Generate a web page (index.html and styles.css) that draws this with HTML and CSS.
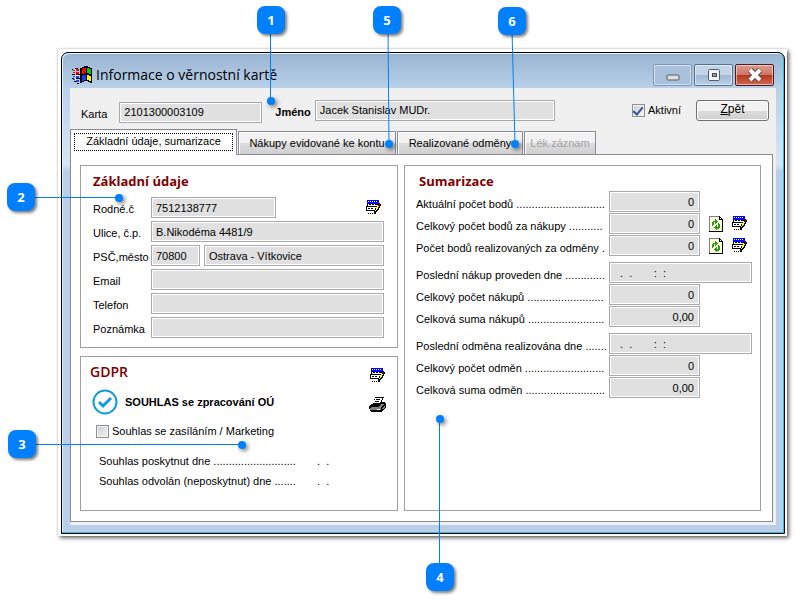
FILE: index.html
```html
<!DOCTYPE html>
<html lang="cs">
<head>
    <meta charset="UTF-8">
    <meta name="viewport" content="width=device-width, initial-scale=1.0">
    <title>Informace o věrnostní kartě</title>
    <link rel="stylesheet" href="styles.css">
</head>
<body>
    <!-- Shared icons -->
    <svg class="sprite" aria-hidden="true">
        <symbol id="icon-edit" viewBox="0 0 15 15" shape-rendering="crispEdges">
            <path fill="#0000ff" d="M1 0h12v4H1z"/>
            <path fill="#fff" d="M2 1h1v1H2zM4 1h1v1H4zM6 1h1v1H6zM8 1h1v1H8zM10 1h1v1h-1z"/>
            <path fill="#000" d="M1 4h11v3H1zM0 6h11v5H0z"/>
            <path fill="#fff" d="M2 4h10v2H2zM1 7h9v3H1z"/>
            <path fill="#000" d="M3 4h2v1H3zM6 4h2v1H6zM9 4h2v1H9zM2 8h2v1H2zM5 8h2v1H5zM2 13h1v1H2zM4 13h1v1H4zM6 13h1v1H6zM8 11h2v3H8z"/>
            <path fill="#000" d="M12 3h2v1h1v2h-1v2h-1v2h-1v1h-1v1h-1v1H8v-3h1V8h1V6h1V4h1z"/>
            <path fill="#ffff00" d="M11 5h1v1h1v1h-1v2h-1v1h-1v1H9v-1h1V7h1z"/>
            <path fill="#800000" d="M12 3h1v1h1v2h-1V5h-1z"/>
        </symbol>
        <symbol id="icon-refresh" viewBox="0 0 14 16" shape-rendering="crispEdges">
            <path fill="#808080" d="M0 0h11v1H1v14H0z"/>
            <path fill="#000" d="M10 0h1v1h1v1h1v1h1v13H0v-1h13V4h-3z"/>
            <path fill="#ffffe1" d="M1 1h9v3h3v11H1z"/>
            <path fill="#fff" d="M11 2h1v1h-1z"/>
            <path fill="#2a9a10" d="M4 5h2V3h1v1h1v1h1v1H8v1H7v1H6V6H5v3H4v1H3V6h1zM9 7h1v1h1v4h-1v1H8v1H7v-1H6v-1H5v-1h1v-1h1V9h1v2h1z"/>
        </symbol>
        <symbol id="icon-print" viewBox="0 0 17 16" shape-rendering="crispEdges">
            <path fill="#000" d="M6 0h9v1h-1v2h-1v2h3v1h1v5h-1v1h-1v1h-1v1h-1v1H2v-1H1v-2H0V9h1V8h1V7h2V5h1V2h1z"/>
            <path fill="#fff" d="M6 1h7v2h-1v2h-1v1H4V5h1V3h1z"/>
            <path fill="#000" d="M7 2h4v1H7zM6 4h4v1H6z"/>
            <path fill="#808080" d="M12 7h3v1h-1v1h-1v1h-1v1H2v-1h8V9h1V8h1zM1 11h11v2H1zM13 11h1v-1h1V9h1v2h-1v1h-2z"/>
            <path fill="#fff" d="M8 12h3v1H8z"/>
        </symbol>
    </svg>

    <main class="page">
        <div class="shot">
            <div class="window">
                <header class="title-bar">
                    <svg class="logo" viewBox="0 0 20 18" shape-rendering="crispEdges" aria-hidden="true">
                        <path fill="#000" d="M10 1h2V0h4v1h2v1h2v15h-2v-1h-2v-1h-4v1h-2v1H8V2h2z"/>
                        <path fill="#ff0000" d="M10 3h1V2h3v5h-2v1h-2zM1 4h2v1H1zM4 3h3v2H4zM1 6h2v1H1zM4 6h3v2H4z"/>
                        <path fill="#00d000" d="M15 2h2v1h2v5h-2V7h-2z"/>
                        <path fill="#2038ff" d="M10 10h1V9h3v5h-2v1h-2zM1 10h2v1H1zM4 10h3v2H4zM1 13h2v1H1zM4 14h3v2H4z"/>
                        <path fill="#ffff00" d="M15 9h2v1h2v5h-2v-1h-2z"/>
                        <path fill="#000" d="M0 3h1v1H0zM3 2h3v1H3zM0 8h3v1H0zM4 8h4v1H4zM0 12h2v1H0zM4 12h4v1H4zM2 15h2v1H2zM5 17h2v1H5z"/>
                        <path fill="#fff" d="M3 4h1v1H3zM3 9h4v1H3zM3 13h1v1H3z"/>
                    </svg>
                    <h1>Informace o věrnostní kartě</h1>
                    <div class="window-buttons">
                        <button type="button" class="minimize" aria-label="Minimalizovat">
                            <svg width="14" height="14" viewBox="0 0 14 14"><rect x="1" y="7" width="12" height="5" rx="1" fill="#ddd" stroke="#555c68"/></svg>
                        </button>
                        <button type="button" aria-label="Maximalizovat">
                            <svg width="14" height="14" viewBox="0 0 14 14"><rect x="1.500" y="1.500" width="11" height="11" rx="1" fill="#f4f4f4" stroke="#555c68"/><rect x="5.500" y="5.500" width="4" height="3" fill="#7f9cc0" stroke="#454c58"/></svg>
                        </button>
                        <button type="button" class="close" aria-label="Zavřít">
                            <svg width="16" height="14" viewBox="0 0 16 14"><path d="M3 2l10 10M13 2L3 12" stroke="#57424a" stroke-width="6"/><path d="M3 2l10 10M13 2L3 12" stroke="#fff" stroke-width="4"/></svg>
                        </button>
                    </div>
                </header>

                <div class="client">
                    <div class="card-bar">
                        <div class="card-id">
                            <label for="karta">Karta</label>
                            <input class="field card-number" id="karta" type="text" value="2101300003109" readonly>
                        </div>
                        <label class="strong" for="jmeno">Jméno</label>
                        <input class="field card-name" id="jmeno" type="text" value="Jacek Stanislav MUDr." readonly>
                        <label class="check active-check"><input type="checkbox" checked>Aktivní</label>
                        <button type="button" class="back"><u>Z</u>pět</button>
                    </div>

                    <div class="tabs" role="tablist">
                        <button type="button" class="tab selected" role="tab" aria-selected="true"><span>Základní údaje, sumarizace</span></button>
                        <button type="button" class="tab purchases" role="tab">Nákupy evidované ke kontu</button>
                        <button type="button" class="tab rewards" role="tab">Realizované odměny</button>
                        <button type="button" class="tab record" role="tab" disabled>Lék.záznam</button>
                    </div>

                    <div class="panel" role="tabpanel">
                        <div class="column">
                            <section class="group basic">
                                <h2>Základní údaje</h2>
                                <div class="row">
                                    <label for="rodne">Rodné.č</label>
                                    <input class="field birth" id="rodne" type="text" value="7512138777" readonly>
                                    <button type="button" class="icon push" aria-label="Upravit"><svg width="15" height="15"><use href="#icon-edit"/></svg></button>
                                </div>
                                <div class="row">
                                    <label for="ulice">Ulice, č.p.</label>
                                    <input class="field" id="ulice" type="text" value="B.Nikodéma 4481/9" readonly>
                                </div>
                                <div class="row">
                                    <label for="psc">PSČ,město</label>
                                    <input class="field zip" id="psc" type="text" value="70800" readonly>
                                    <input class="field" type="text" value="Ostrava - Vítkovice" aria-label="Město" readonly>
                                </div>
                                <div class="row">
                                    <label for="email">Email</label>
                                    <input class="field" id="email" type="text" readonly>
                                </div>
                                <div class="row">
                                    <label for="telefon">Telefon</label>
                                    <input class="field" id="telefon" type="text" readonly>
                                </div>
                                <div class="row">
                                    <label for="poznamka">Poznámka</label>
                                    <input class="field" id="poznamka" type="text" readonly>
                                </div>
                            </section>

                            <section class="group gdpr">
                                <div class="gdpr-head">
                                    <h2>GDPR</h2>
                                    <button type="button" class="icon" aria-label="Upravit"><svg width="15" height="15"><use href="#icon-edit"/></svg></button>
                                </div>
                                <div class="consent">
                                    <svg width="26" height="26" viewBox="0 0 26 26" fill="none" stroke="#129bdb" aria-hidden="true">
                                        <circle cx="13" cy="13" r="11.500" stroke-width="2"/>
                                        <path d="M7 13l4 4 8-8" stroke-width="3"/>
                                    </svg>
                                    <strong>SOUHLAS se zpracování OÚ</strong>
                                    <button type="button" class="icon push" aria-label="Tisk"><svg width="17" height="16"><use href="#icon-print"/></svg></button>
                                </div>
                                <label class="check marketing"><input type="checkbox">Souhlas se zasíláním / Marketing</label>
                                <div class="date-row"><span>Souhlas poskytnut dne ...........................</span><span>.&nbsp; .</span></div>
                                <div class="date-row"><span>Souhlas odvolán (neposkytnut) dne .......</span><span>.&nbsp; .</span></div>
                            </section>
                        </div>

                        <section class="group summary">
                            <h2>Sumarizace</h2>
                            <div class="row">
                                <label for="body">Aktuální počet bodů .............................</label>
                                <input class="field number" id="body" type="text" value="0" readonly>
                            </div>
                            <div class="row">
                                <label for="body-nakupy">Celkový počet bodů za nákupy ...........</label>
                                <input class="field number" id="body-nakupy" type="text" value="0" readonly>
                                <button type="button" class="icon" aria-label="Přepočítat"><svg width="14" height="16"><use href="#icon-refresh"/></svg></button>
                                <button type="button" class="icon" aria-label="Upravit"><svg width="15" height="15"><use href="#icon-edit"/></svg></button>
                            </div>
                            <div class="row">
                                <label for="body-odmeny">Počet bodů realizovaných za odměny .</label>
                                <input class="field number" id="body-odmeny" type="text" value="0" readonly>
                                <button type="button" class="icon" aria-label="Přepočítat"><svg width="14" height="16"><use href="#icon-refresh"/></svg></button>
                                <button type="button" class="icon" aria-label="Upravit"><svg width="15" height="15"><use href="#icon-edit"/></svg></button>
                            </div>
                            <div class="row first">
                                <label for="nakup-dne">Poslední nákup proveden dne .............</label>
                                <input class="field date" id="nakup-dne" type="text" value="  .  .       :  :" readonly>
                            </div>
                            <div class="row">
                                <label for="nakupy">Celkový počet nákupů .........................</label>
                                <input class="field number" id="nakupy" type="text" value="0" readonly>
                            </div>
                            <div class="row">
                                <label for="nakupy-suma">Celková suma nákupů .........................</label>
                                <input class="field number" id="nakupy-suma" type="text" value="0,00" readonly>
                            </div>
                            <div class="row first">
                                <label for="odmena-dne">Poslední odměna realizována dne .......</label>
                                <input class="field date" id="odmena-dne" type="text" value="  .  .       :  :" readonly>
                            </div>
                            <div class="row">
                                <label for="odmeny">Celkový počet odměn ..........................</label>
                                <input class="field number" id="odmeny" type="text" value="0" readonly>
                            </div>
                            <div class="row">
                                <label for="odmeny-suma">Celková suma odměn ..........................</label>
                                <input class="field number" id="odmeny-suma" type="text" value="0,00" readonly>
                            </div>
                        </section>
                    </div>
                </div>
            </div>
        </div>

        <!-- Numbered callouts lying over the window -->
        <svg class="leaders" width="797" height="603" viewBox="0 0 797 603" aria-hidden="true">
            <g fill="none" stroke="#0080ff">
                <path d="M270.500 30V100M388 30l1 114M512 30l3 114M30 197.500h90M30 444.500h212M439.500 419v150"/>
            </g>
            <g class="dots" fill="#0080ff">
                <circle cx="271" cy="101" r="4"/>
                <circle cx="389" cy="144" r="4"/>
                <circle cx="515" cy="144" r="4"/>
                <circle cx="119" cy="198" r="4"/>
                <circle cx="242" cy="445" r="4"/>
                <circle cx="440" cy="419" r="4"/>
            </g>
        </svg>
        <span class="badge badge-1">1</span>
        <span class="badge badge-2">2</span>
        <span class="badge badge-3">3</span>
        <span class="badge badge-4">4</span>
        <span class="badge badge-5">5</span>
        <span class="badge badge-6">6</span>
    </main>
</body>
</html>
```
FILE: styles.css
```css
* {
    box-sizing: border-box;
}

body {
    margin: 0;
    background-color: #ffffff;
    color: #000000;
    font-family: "Liberation Sans", Arial, sans-serif;
    font-size: 11px;
    line-height: 14px;
}

button, input {
    font: inherit;
    color: inherit;
    margin: 0;
}

h1, h2 {
    margin: 0;
}

.sprite {
    display: none;
}

.page {
    position: relative;
    padding: 49px 10px 66px 58px;
}

/* White sheet with a shadow round the window */
.shot {
    padding: 3px 2px 2px 3px;
    background-color: #ffffff;
    box-shadow: 2px 2px 4px rgba(0, 0, 0, 0.6), 0 0 2px rgba(0, 0, 0, 0.2);
}

.window {
    padding: 0 8px 8px;
    border: 1px solid #000000;
    border-radius: 7px 7px 0 0;
    background: linear-gradient(#99b4d1 0, #b9d1ea 36px, #d8e6f5 112px, #b9cfe9 118px);
    box-shadow: inset -1px -1px 0 #22c4dc, inset 1px 1px 0 #e6f0fa;
}

.title-bar {
    display: flex;
    align-items: center;
    height: 35px;
    padding: 8px 2px 0;
}

.logo {
    width: 20px;
    height: 18px;
    margin-right: 4px;
}

.title-bar h1 {
    font-family: "Open Sans", "Segoe UI", sans-serif;
    font-size: 14px;
    font-weight: normal;
    line-height: 20px;
}

.window-buttons {
    display: flex;
    gap: 2px;
    margin-left: auto;
}

.window-buttons button {
    display: flex;
    align-items: center;
    justify-content: center;
    width: 39px;
    height: 22px;
    padding: 0;
    border: 1px solid #56708f;
    border-radius: 2px;
    background: linear-gradient(#c3d4e8 50%, #9db6d2 50%, #b9d0e8);
    box-shadow: inset 0 0 0 1px rgba(255, 255, 255, 0.5);
}

.window-buttons .minimize {
    border-color: #8499b5;
    background: #a9c1dc;
}

.window-buttons .close {
    border-color: #4a1a22;
    background: linear-gradient(#dc9a8e 0, #cf7565 50%, #b8341d 50%, #cf6a50);
}

.client {
    padding: 0 3px 3px 0;
    background-color: #f0f0f0;
}

.card-bar {
    display: flex;
    align-items: center;
    height: 41px;
    padding: 3px 4px 0 11px;
}

.card-id {
    display: flex;
    align-items: center;
    padding-top: 4px;
}

.card-id label {
    padding-top: 3px;
}

.strong {
    margin: 0 4px 0 13px;
    padding-top: 3px;
    font-weight: bold;
}

.field {
    flex: 1;
    min-width: 0;
    height: 21px;
    padding: 0 5px 0 4px;
    border: 1px solid #a9a9ad;
    border-radius: 0;
    background-color: #e0e0e0;
    box-shadow: inset 0 0 0 1px #ffffff;
    outline: none;
}

.card-number {
    flex: 0 0 143px;
    margin-left: 12px;
}

.card-name {
    flex: 0 1 240px;
}

.check {
    display: flex;
    align-items: center;
    gap: 3px;
}

.check input {
    appearance: none;
    width: 13px;
    height: 13px;
    border: 1px solid #8e8f8f;
    background: linear-gradient(135deg, #c8ccd2, #f6f6f6);
    box-shadow: inset 0 0 0 1px #f4f4f4;
}

.check input:checked {
    display: grid;
    place-items: center;
}

.check input:checked::before {
    content: "";
    width: 4px;
    height: 8px;
    border: solid #3b5595;
    border-width: 0 2px 2px 0;
    transform: rotate(40deg);
}

.active-check {
    margin-left: auto;
}

.back {
    width: 73px;
    height: 21px;
    margin-left: 15px;
    padding: 0 0 2px;
    border: 1px solid #707070;
    border-radius: 3px;
    background: linear-gradient(#f2f2f2 50%, #dddddd 50%, #cfcfcf);
    box-shadow: inset 0 0 0 1px #fcfcfc;
    font-size: 12px;
}

.tabs {
    display: flex;
    align-items: flex-end;
    height: 25px;
    gap: 1px;
}

.tab {
    height: 23px;
    padding: 0;
    border: 1px solid #898c95;
    border-bottom: 0;
    background: linear-gradient(#f2f2f2 50%, #dddddd 50%, #cfcfcf);
    box-shadow: inset 1px 1px 0 #ffffff;
    white-space: nowrap;
}

.tab.selected {
    width: 167px;
    height: 26px;
    margin-bottom: -1px;
    padding: 3px;
    background: #ffffff;
    z-index: 1;
}

.tab.selected span {
    display: block;
    height: 18px;
    border: 1px dotted #000000;
    margin-bottom: 3px;
}

.purchases {
    width: 158px;
}

.rewards {
    width: 126px;
}

.record {
    width: 72px;
    color: #a0a0a0;
}

.panel {
    display: grid;
    grid-template-columns: 318fr 357fr;
    gap: 6px;
    padding: 10px 11px 10px 9px;
    border: 1px solid #898c95;
    background-color: #ffffff;
}

.column {
    display: flex;
    flex-direction: column;
    gap: 8px;
}

.group {
    padding: 5px 13px 9px 12px;
    border: 1px solid #a0a0a0;
}

.group h2 {
    color: #800000;
    font-family: "Open Sans", Tahoma, sans-serif;
    font-size: 13px;
    line-height: 20px;
}

.row {
    display: flex;
    align-items: center;
    gap: 4px;
    margin-bottom: 3px;
}

.row label {
    flex: none;
    padding-top: 3px;
    white-space: nowrap;
}

.basic h2 {
    margin-bottom: 6px;
}

.basic label {
    width: 54px;
}

.basic .row:last-child {
    margin-bottom: 0;
}

.birth {
    flex: 0 0 125px;
}

.zip {
    flex: 0 0 49px;
}

.icon {
    flex: none;
    padding: 0;
    border: 0;
    background: none;
}

.icon svg {
    display: block;
}

.push {
    margin-left: auto;
}

.basic .push {
    margin-right: 3px;
}

.gdpr {
    flex: 1;
    padding: 4px 11px 19px 9px;
}

.gdpr-head {
    display: flex;
    align-items: center;
    justify-content: space-between;
    padding-right: 1px;
}

.gdpr .gdpr-head h2 {
    font-size: 14px;
    font-weight: 600;
}

.gdpr-head .icon {
    padding-top: 7px;
}

.consent {
    display: flex;
    align-items: center;
    margin: 6px 0 8px 2px;
}

.consent strong {
    margin-left: 7px;
}

.consent .icon {
    padding-top: 6px;
}

.marketing {
    height: 16px;
    margin: 0 0 12px 6px;
}

.date-row {
    display: grid;
    grid-template-columns: 218px 1fr;
    margin-left: 9px;
    line-height: 20px;
    white-space: nowrap;
}

.summary {
    padding: 5px 8px 9px 11px;
}

.summary h2 {
    padding-left: 3px;
}

.summary .row {
    gap: 9px;
    margin-bottom: 1px;
}

.summary .row.first {
    margin-top: 6px;
}

.summary label {
    width: 184px;
    padding-top: 5px;
}

.number {
    flex: 0 0 91px;
    text-align: right;
}

.date {
    flex: 0 0 143px;
}

.leaders {
    position: absolute;
    top: 0;
    left: 0;
    pointer-events: none;
    z-index: 2;
}

.dots {
    filter: drop-shadow(2px 2px 2px rgba(0, 0, 0, 0.5));
}

.badge {
    position: absolute;
    z-index: 3;
    width: 28px;
    height: 28px;
    border-radius: 8px;
    background-color: #0080ff;
    box-shadow: 2px 2px 3px rgba(0, 0, 0, 0.5);
    color: #ffffff;
    font-family: "Open Sans", sans-serif;
    font-size: 13px;
    font-weight: bold;
    line-height: 28px;
    text-align: center;
}

.badge-1 {
    top: 6px;
    left: 257px;
}

.badge-2 {
    top: 183px;
    left: 7px;
}

.badge-3 {
    top: 430px;
    left: 8px;
}

.badge-4 {
    top: 563px;
    left: 426px;
}

.badge-5 {
    top: 6px;
    left: 373px;
}

.badge-6 {
    top: 7px;
    left: 498px;
}
```
